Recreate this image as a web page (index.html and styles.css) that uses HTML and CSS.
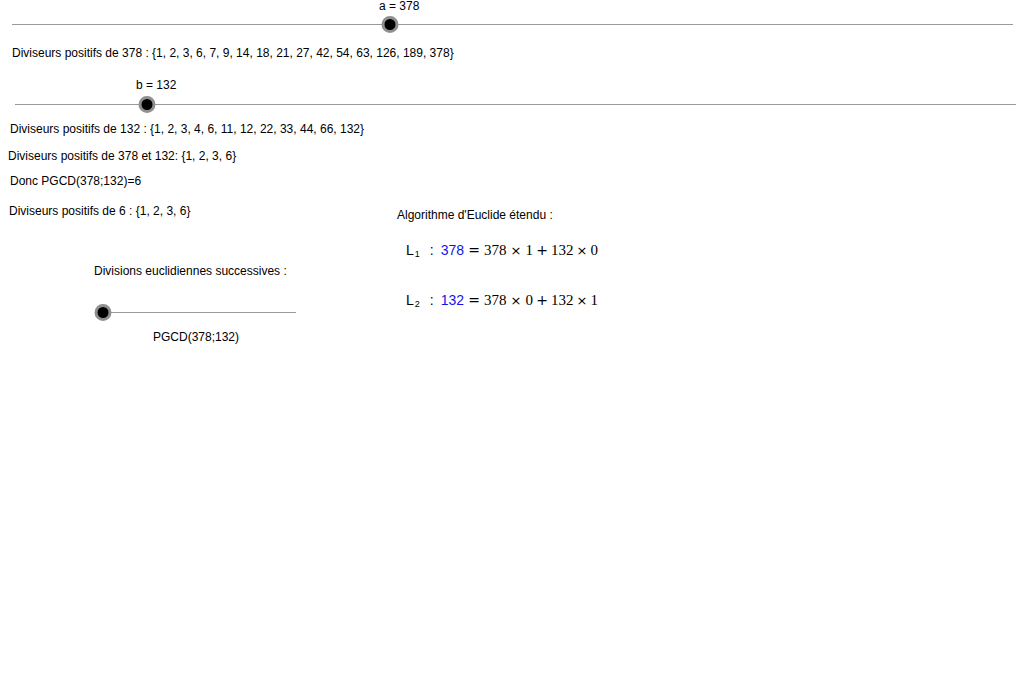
FILE: index.html
```html
<!DOCTYPE html>
<html lang="fr">
<head>
<meta charset="utf-8">
<title>PGCD</title>
<link rel="stylesheet" href="styles.css">
</head>
<body>
<div class="canvas">
  <div class="slider slider-a"><div class="track"></div><div class="thumb thumb-a"></div></div>
  <div class="txt lbl-a">a = 378</div>
  <div class="txt t1">Diviseurs positifs de 378 : {1, 2, 3, 6, 7, 9, 14, 18, 21, 27, 42, 54, 63, 126, 189, 378}</div>

  <div class="slider slider-b"><div class="track"></div><div class="thumb thumb-b"></div></div>
  <div class="txt lbl-b">b = 132</div>
  <div class="txt t2">Diviseurs positifs de 132 : {1, 2, 3, 4, 6, 11, 12, 22, 33, 44, 66, 132}</div>
  <div class="txt t3">Diviseurs positifs de 378 et 132: {1, 2, 3, 6}</div>
  <div class="txt t4">Donc PGCD(378;132)=6</div>
  <div class="txt t5">Diviseurs positifs de 6 : {1, 2, 3, 6}</div>

  <div class="txt t6">Divisions euclidiennes successives :</div>
  <div class="slider slider-c"><div class="track"></div><div class="thumb thumb-c"></div></div>
  <div class="txt t7">PGCD(378;132)</div>

  <div class="txt t8">Algorithme d'Euclide étendu :</div>
  <div class="math m1">
    <span class="L">L<sub>1</sub></span><span class="colon">:</span><span class="blue">378</span><span class="op eq">=</span><span class="num">378</span><span class="op tm1">×</span><span class="num">1</span><span class="op pl">+</span><span class="num">132</span><span class="op tm2">×</span><span class="num">0</span>
  </div>
  <div class="math m2">
    <span class="L">L<sub>2</sub></span><span class="colon">:</span><span class="blue">132</span><span class="op eq">=</span><span class="num">378</span><span class="op tm1">×</span><span class="num">0</span><span class="op pl">+</span><span class="num">132</span><span class="op tm2">×</span><span class="num">1</span>
  </div>
</div>
</body>
</html>
```

FILE: styles.css
```css
html, body {
  margin: 0;
  padding: 0;
  background: #fff;
}
.canvas {
  position: relative;
  width: 1029px;
  height: 694px;
  overflow: hidden;
  background: #fff;
  font-family: "Liberation Sans", Arial, sans-serif;
  font-size: 12px;
  color: #000;
}
.txt {
  position: absolute;
  line-height: 14px;
  white-space: nowrap;
}
.slider {
  position: absolute;
  height: 1px;
}
.track {
  height: 1px;
  background: #9a9a9a;
}
.thumb {
  position: absolute;
  top: -8px;
  width: 11px;
  height: 11px;
  border-radius: 50%;
  background: #000;
  border: 3px solid #8f8f8f;
  box-sizing: content-box;
  transform: translateX(-50%);
}
.slider-a { left: 12px; top: 24px; width: 1001px; }
.thumb-a { left: 378px; }
.lbl-a { left: 379px; top: 1px; line-height: 10px; }
.t1 { left: 12px; top: 46px; }

.slider-b { left: 15px; top: 104px; width: 1001px; }
.thumb-b { left: 132px; }
.lbl-b { left: 136px; top: 78px; }
.t2 { left: 10px; top: 122px; }
.t3 { left: 8px; top: 149px; }
.t4 { left: 10px; top: 174px; }
.t5 { left: 9px; top: 204px; }

.t6 { left: 94px; top: 264px; }
.slider-c { left: 103px; top: 312px; width: 193px; }
.thumb-c { left: 0; }
.t7 { left: 153px; top: 330px; }

.t8 { left: 397px; top: 208px; }

.math {
  position: absolute;
  left: 406px;
  display: flex;
  align-items: baseline;
  font-family: "Liberation Serif", "Times New Roman", serif;
  font-size: 15px;
  line-height: 18px;
  white-space: nowrap;
}
.m1 { top: 241px; }
.m2 { top: 291px; }
.math .L {
  font-family: "Liberation Sans", Arial, sans-serif;
  font-size: 14px;
}
.math .L sub {
  font-size: 9px;
  vertical-align: -2px;
  margin-left: 1px;
}
.math .colon {
  font-family: "Liberation Sans", Arial, sans-serif;
  font-size: 14px;
  margin-left: 10px;
  margin-right: 7px;
}
.math .blue {
  font-family: "Liberation Sans", Arial, sans-serif;
  font-size: 14px;
  color: #1515e6;
}
.math .op {
  display: inline-block;
  text-align: center;
  font-family: "DejaVu Sans", sans-serif;
  font-size: 14px;
}
.math .eq { width: 20px; }
.math .pl { width: 18px; }
.math .tm1 { width: 19px; font-size: 13px; }
.math .tm2 { width: 17px; font-size: 13px; }
```
